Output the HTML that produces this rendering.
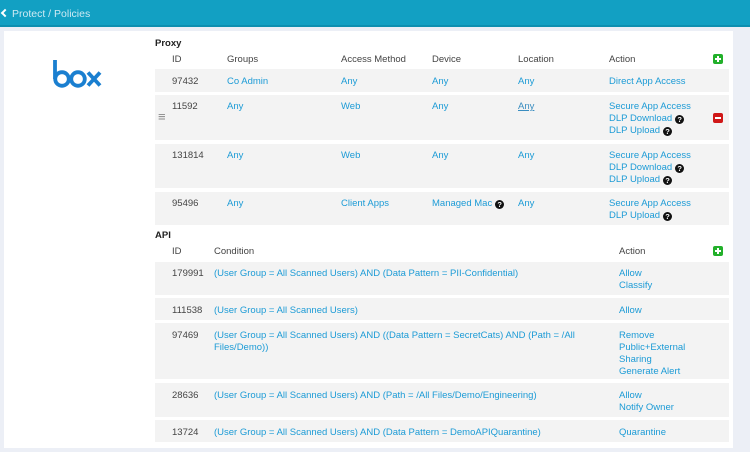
<!DOCTYPE html>
<html><head><meta charset="utf-8"><style>
*{margin:0;padding:0;box-sizing:border-box}
body{width:750px;height:452px;background:#eceff6;font-family:"Liberation Sans",sans-serif;font-size:9.5px;color:#444;position:relative;overflow:hidden}
.hdr{position:absolute;left:0;top:0;width:750px;height:27px;background:#12a0c3;border-bottom:2px solid #0d8fb0}
.hdr span{position:absolute;left:12px;top:8px;color:#cfeaf3;font-size:10.5px}
.hdr i{position:absolute;left:2px;top:10px;width:6px;height:6px;border-left:2px solid #fff;border-bottom:2px solid #fff;transform:rotate(45deg)}
.panel{position:absolute;left:4px;top:31px;width:729px;height:417px;background:#fff}
.a{position:absolute;white-space:nowrap;line-height:12px;margin-top:1px}
.l{color:#1c9bd6}
.row{position:absolute;left:155px;width:574px;background:#f3f3f3}
.b{font-weight:bold;color:#222}
.plus,.minus{position:absolute;width:10px;height:10px;border-radius:2px}
.plus{background:#22b02a}.minus{background:#d01818}
.plus:before,.minus:before{content:"";position:absolute;left:2px;top:4px;width:6px;height:2px;background:#fff}
.plus:after{content:"";position:absolute;left:4px;top:2px;width:2px;height:6px;background:#fff}
.q{display:inline-block;width:9px;height:9px;border-radius:50%;background:#111;color:#fff;font-size:7.5px;line-height:9px;text-align:center;font-weight:bold;vertical-align:-1px;margin-left:3px}
</style></head><body>
<div class="hdr"><i></i><span>Protect / Policies</span></div>
<div class="panel"></div>
<svg style="position:absolute;left:52px;top:59px" width="52" height="30" viewBox="0 0 52 30"><g fill="none" stroke="#1a7fd0" stroke-width="3.8"><path d="M3 1v19"/><circle cx="10" cy="20" r="6.8"/><circle cx="26" cy="20" r="6.8"/><path d="M36 13.5l12 13M48 13.5l-12 13"/></g></svg>
<div class="row" style="top:69px;height:23px"></div>
<div class="row" style="top:95px;height:45px"></div>
<div class="row" style="top:144px;height:44px"></div>
<div class="row" style="top:192px;height:33px"></div>
<div class="row" style="top:262px;height:33px"></div>
<div class="row" style="top:298px;height:22px"></div>
<div class="row" style="top:323px;height:56px"></div>
<div class="row" style="top:383px;height:34px"></div>
<div class="row" style="top:420px;height:22px"></div>
<div class="a b" style="left:155px;top:37px">Proxy</div>
<div class="a" style="left:172px;top:53px">ID</div><div class="a" style="left:227px;top:53px">Groups</div><div class="a" style="left:341px;top:53px">Access Method</div><div class="a" style="left:432px;top:53px">Device</div><div class="a" style="left:518px;top:53px">Location</div><div class="a" style="left:609px;top:53px">Action</div>
<div class="plus" style="left:713px;top:54px"></div>
<div class="a" style="left:172px;top:75px">97432</div><div class="a l" style="left:227px;top:75px">Co Admin</div><div class="a l" style="left:341px;top:75px">Any</div><div class="a l" style="left:432px;top:75px">Any</div><div class="a l" style="left:518px;top:75px">Any</div><div class="a l" style="left:609px;top:75px">Direct App Access</div>
<div class="a" style="left:158px;top:110px;color:#888;font-size:13px">≡</div>
<div class="a" style="left:172px;top:100px">11592</div><div class="a l" style="left:227px;top:100px">Any</div><div class="a l" style="left:341px;top:100px">Web</div><div class="a l" style="left:432px;top:100px">Any</div><div class="a l" style="left:518px;top:100px;text-decoration:underline;color:#3a8dc0">Any</div>
<div class="a l" style="left:609px;top:100px">Secure App Access<br>DLP Download<span class="q">?</span><br>DLP Upload<span class="q">?</span></div>
<div class="minus" style="left:713px;top:113px"></div>
<div class="a" style="left:172px;top:149px">131814</div><div class="a l" style="left:227px;top:149px">Any</div><div class="a l" style="left:341px;top:149px">Web</div><div class="a l" style="left:432px;top:149px">Any</div><div class="a l" style="left:518px;top:149px">Any</div>
<div class="a l" style="left:609px;top:149px">Secure App Access<br>DLP Download<span class="q">?</span><br>DLP Upload<span class="q">?</span></div>
<div class="a" style="left:172px;top:197px">95496</div><div class="a l" style="left:227px;top:197px">Any</div><div class="a l" style="left:341px;top:197px">Client Apps</div><div class="a l" style="left:432px;top:197px">Managed Mac<span class="q">?</span></div><div class="a l" style="left:518px;top:197px">Any</div>
<div class="a l" style="left:609px;top:197px">Secure App Access<br>DLP Upload<span class="q">?</span></div>
<div class="a b" style="left:155px;top:229px">API</div>
<div class="a" style="left:172px;top:245px">ID</div><div class="a" style="left:214px;top:245px">Condition</div><div class="a" style="left:619px;top:245px">Action</div>
<div class="plus" style="left:713px;top:246px"></div>
<div class="a" style="left:172px;top:267px">179991</div><div class="a l" style="left:214px;top:267px">(User Group = All Scanned Users) AND (Data Pattern = PII-Confidential)</div><div class="a l" style="left:619px;top:267px">Allow<br>Classify</div>
<div class="a" style="left:172px;top:304px">111538</div><div class="a l" style="left:214px;top:304px">(User Group = All Scanned Users)</div><div class="a l" style="left:619px;top:304px">Allow</div>
<div class="a" style="left:172px;top:329px">97469</div><div class="a l" style="left:214px;top:329px">(User Group = All Scanned Users) AND ((Data Pattern = SecretCats) AND (Path = /All<br>Files/Demo))</div><div class="a l" style="left:619px;top:329px">Remove<br>Public+External<br>Sharing<br>Generate Alert</div>
<div class="a" style="left:172px;top:389px">28636</div><div class="a l" style="left:214px;top:389px">(User Group = All Scanned Users) AND (Path = /All Files/Demo/Engineering)</div><div class="a l" style="left:619px;top:389px">Allow<br>Notify Owner</div>
<div class="a" style="left:172px;top:426px">13724</div><div class="a l" style="left:214px;top:426px">(User Group = All Scanned Users) AND (Data Pattern = DemoAPIQuarantine)</div><div class="a l" style="left:619px;top:426px">Quarantine</div>
</body></html>
